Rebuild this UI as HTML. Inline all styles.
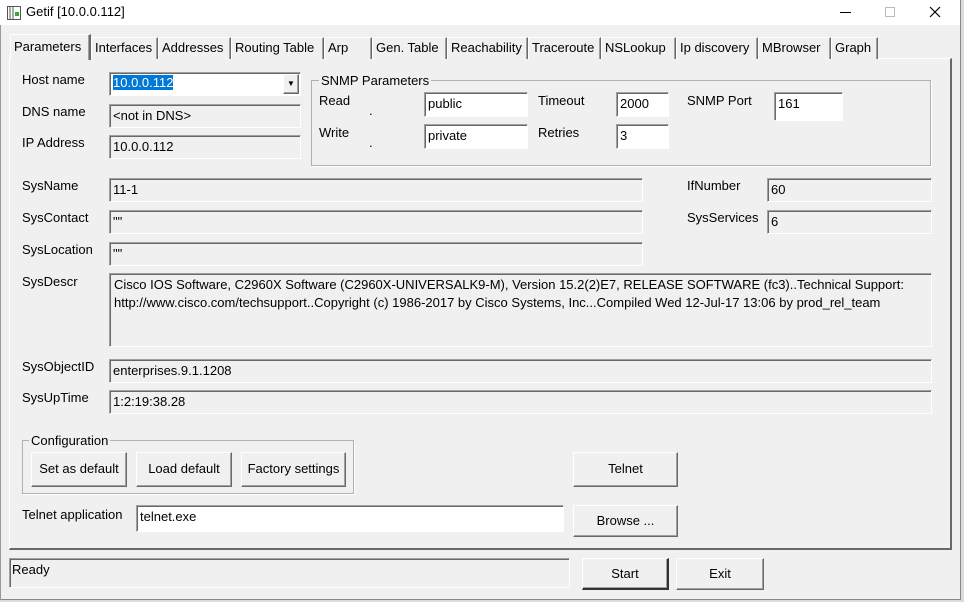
<!DOCTYPE html>
<html><head><style>
*{box-sizing:border-box;margin:0;padding:0}
body{width:964px;height:602px;background:#dcdcdc;font-family:"Liberation Sans",sans-serif;font-size:13px;color:#000;position:relative;overflow:hidden}
.win{position:absolute;left:0;top:0;width:961px;height:600px;background:#f0f0f0;border-right:1px solid #888;border-bottom:1px solid #888}
.title{position:absolute;left:0;top:0;width:960px;height:25px;background:#fff}
.a{position:absolute;white-space:nowrap}
.f{position:absolute;border-top:1px solid #a0a0a0;border-left:1px solid #a0a0a0;border-right:1px solid #fff;border-bottom:1px solid #fff;box-shadow:inset 1px 1px 0 #696969;background:#f0f0f0;padding:3px 3px;white-space:nowrap}
.w{background:#fff}
.b{position:absolute;border-top:1px solid #fff;border-left:1px solid #fff;border-right:1px solid #696969;border-bottom:1px solid #696969;box-shadow:inset -1px -1px 0 #a0a0a0;background:#f0f0f0;text-align:center}
.g{position:absolute;border:1px solid #b0b0b0;box-shadow:1px 1px 0 #fff}
.lg{position:absolute;top:-8px;left:7px;background:#f0f0f0;padding:0 2px}
.tab{position:absolute;top:37px;height:22px;border-top:1px solid #fff;border-left:1px solid #fff;border-right:1px solid #696969;box-shadow:inset -1px 0 0 #a0a0a0;padding:2px 3px;white-space:nowrap;background:#f0f0f0}
</style></head><body>
<div class="win">
<div class="a" style="left:0;top:25px;width:1px;height:575px;background:#999"></div>
<div class="title">
<svg class="a" style="left:7px;top:6px" width="14" height="14"><rect x="0.5" y="0.5" width="13" height="13" fill="#fff" stroke="#555"/><line x1="3" y1="1" x2="3" y2="13" stroke="#555"/><line x1="6" y1="1" x2="6" y2="13" stroke="#555"/><rect x="8" y="6" width="4" height="4" fill="#3a3"/></svg>
<div class="a" style="left:26px;top:4px;font-size:13px">Getif [10.0.0.112]</div>
<div class="a" style="left:840px;top:12px;width:11px;height:1px;background:#000"></div>
<div class="a" style="left:885px;top:7px;width:10px;height:10px;border:1px solid #bbb"></div>
<svg class="a" style="left:929px;top:6px" width="12" height="12"><path d="M1 1L11 11M11 1L1 11" stroke="#000" stroke-width="1.2"/></svg>
</div>
<div class="a" style="left:9px;top:58px;width:943px;height:492px;border-top:1px solid #fff;border-left:1px solid #fff;border-right:2px solid #696969;border-bottom:2px solid #696969"></div>
<div class="tab" style="left:10px;top:34px;height:26px;width:81px;z-index:2;padding-top:4px;border-right:2px solid #696969">Parameters</div>
<div class="tab" style="left:91px;width:67px">Interfaces</div>
<div class="tab" style="left:158px;width:73px">Addresses</div>
<div class="tab" style="left:231px;width:93px">Routing Table</div>
<div class="tab" style="left:324px;width:48px">Arp</div>
<div class="tab" style="left:372px;width:75px">Gen. Table</div>
<div class="tab" style="left:447px;width:81px">Reachability</div>
<div class="tab" style="left:528px;width:73px">Traceroute</div>
<div class="tab" style="left:601px;width:75px">NSLookup</div>
<div class="tab" style="left:676px;width:82px">Ip discovery</div>
<div class="tab" style="left:758px;width:73px">MBrowser</div>
<div class="tab" style="left:831px;width:47px">Graph</div>

<div class="a" style="left:22px;top:72px">Host name</div>
<div class="f w" style="left:109px;top:72px;width:192px;height:24px;padding:2px 3px"><span style="background:#0078d7;color:#fff">10.0.0.112</span></div>
<div class="b" style="left:283px;top:74px;width:16px;height:20px;font-size:8px;line-height:18px">▼</div>
<div class="a" style="left:22px;top:104px">DNS name</div>
<div class="f" style="left:109px;top:104px;width:192px;height:24px">&lt;not in DNS&gt;</div>
<div class="a" style="left:22px;top:135px">IP Address</div>
<div class="f" style="left:109px;top:135px;width:192px;height:24px">10.0.0.112</div>

<div class="g" style="left:311px;top:80px;width:620px;height:86px"><div class="lg">SNMP Parameters</div></div>
<div class="a" style="left:319px;top:93px">Read</div><div class="a" style="left:369px;top:103px">.</div>
<div class="f w" style="left:424px;top:92px;width:104px;height:25px">public</div>
<div class="a" style="left:319px;top:125px">Write</div><div class="a" style="left:369px;top:135px">.</div>
<div class="f w" style="left:424px;top:124px;width:104px;height:25px">private</div>
<div class="a" style="left:538px;top:93px">Timeout</div>
<div class="f w" style="left:616px;top:92px;width:53px;height:25px">2000</div>
<div class="a" style="left:538px;top:125px">Retries</div>
<div class="f w" style="left:616px;top:124px;width:53px;height:25px">3</div>
<div class="a" style="left:687px;top:93px">SNMP Port</div>
<div class="f w" style="left:774px;top:92px;width:69px;height:29px">161</div>

<div class="a" style="left:22px;top:178px">SysName</div>
<div class="f" style="left:109px;top:178px;width:534px;height:24px">11-1</div>
<div class="a" style="left:22px;top:210px">SysContact</div>
<div class="f" style="left:109px;top:210px;width:534px;height:24px">""</div>
<div class="a" style="left:22px;top:242px">SysLocation</div>
<div class="f" style="left:109px;top:242px;width:534px;height:24px">""</div>
<div class="a" style="left:687px;top:178px">IfNumber</div>
<div class="f" style="left:767px;top:178px;width:165px;height:24px">60</div>
<div class="a" style="left:687px;top:210px">SysServices</div>
<div class="f" style="left:767px;top:210px;width:165px;height:24px">6</div>
<div class="a" style="left:22px;top:274px">SysDescr</div>
<div class="f" style="left:109px;top:273px;width:823px;height:74px;white-space:normal;line-height:18px;padding:2px 4px">Cisco IOS Software, C2960X Software (C2960X-UNIVERSALK9-M), Version 15.2(2)E7, RELEASE SOFTWARE (fc3)..Technical Support: http://www.cisco.com/techsupport..Copyright (c) 1986-2017 by Cisco Systems, Inc...Compiled Wed 12-Jul-17 13:06 by prod_rel_team</div>
<div class="a" style="left:22px;top:359px">SysObjectID</div>
<div class="f" style="left:109px;top:359px;width:823px;height:24px">enterprises.9.1.1208</div>
<div class="a" style="left:22px;top:390px">SysUpTime</div>
<div class="f" style="left:109px;top:390px;width:823px;height:24px">1:2:19:38.28</div>

<div class="g" style="left:22px;top:440px;width:332px;height:54px"><div class="lg" style="left:6px">Configuration</div></div>
<div class="b" style="left:31px;top:452px;width:96px;height:35px;line-height:32px">Set as default</div>
<div class="b" style="left:136px;top:452px;width:96px;height:35px;line-height:32px">Load default</div>
<div class="b" style="left:241px;top:452px;width:105px;height:35px;line-height:32px">Factory settings</div>
<div class="b" style="left:573px;top:452px;width:105px;height:35px;line-height:32px">Telnet</div>
<div class="a" style="left:22px;top:507px">Telnet application</div>
<div class="f w" style="left:136px;top:505px;width:428px;height:27px">telnet.exe</div>
<div class="b" style="left:573px;top:505px;width:105px;height:32px;line-height:30px">Browse ...</div>

<div class="f" style="left:9px;top:558px;width:561px;height:30px;padding:3px 2px">Ready</div>
<div class="b" style="left:582px;top:558px;width:87px;height:32px;line-height:30px;border-right:2px solid #333;border-bottom:2px solid #333">Start</div>
<div class="b" style="left:676px;top:558px;width:88px;height:32px;line-height:30px">Exit</div>
</div>
</body></html>
